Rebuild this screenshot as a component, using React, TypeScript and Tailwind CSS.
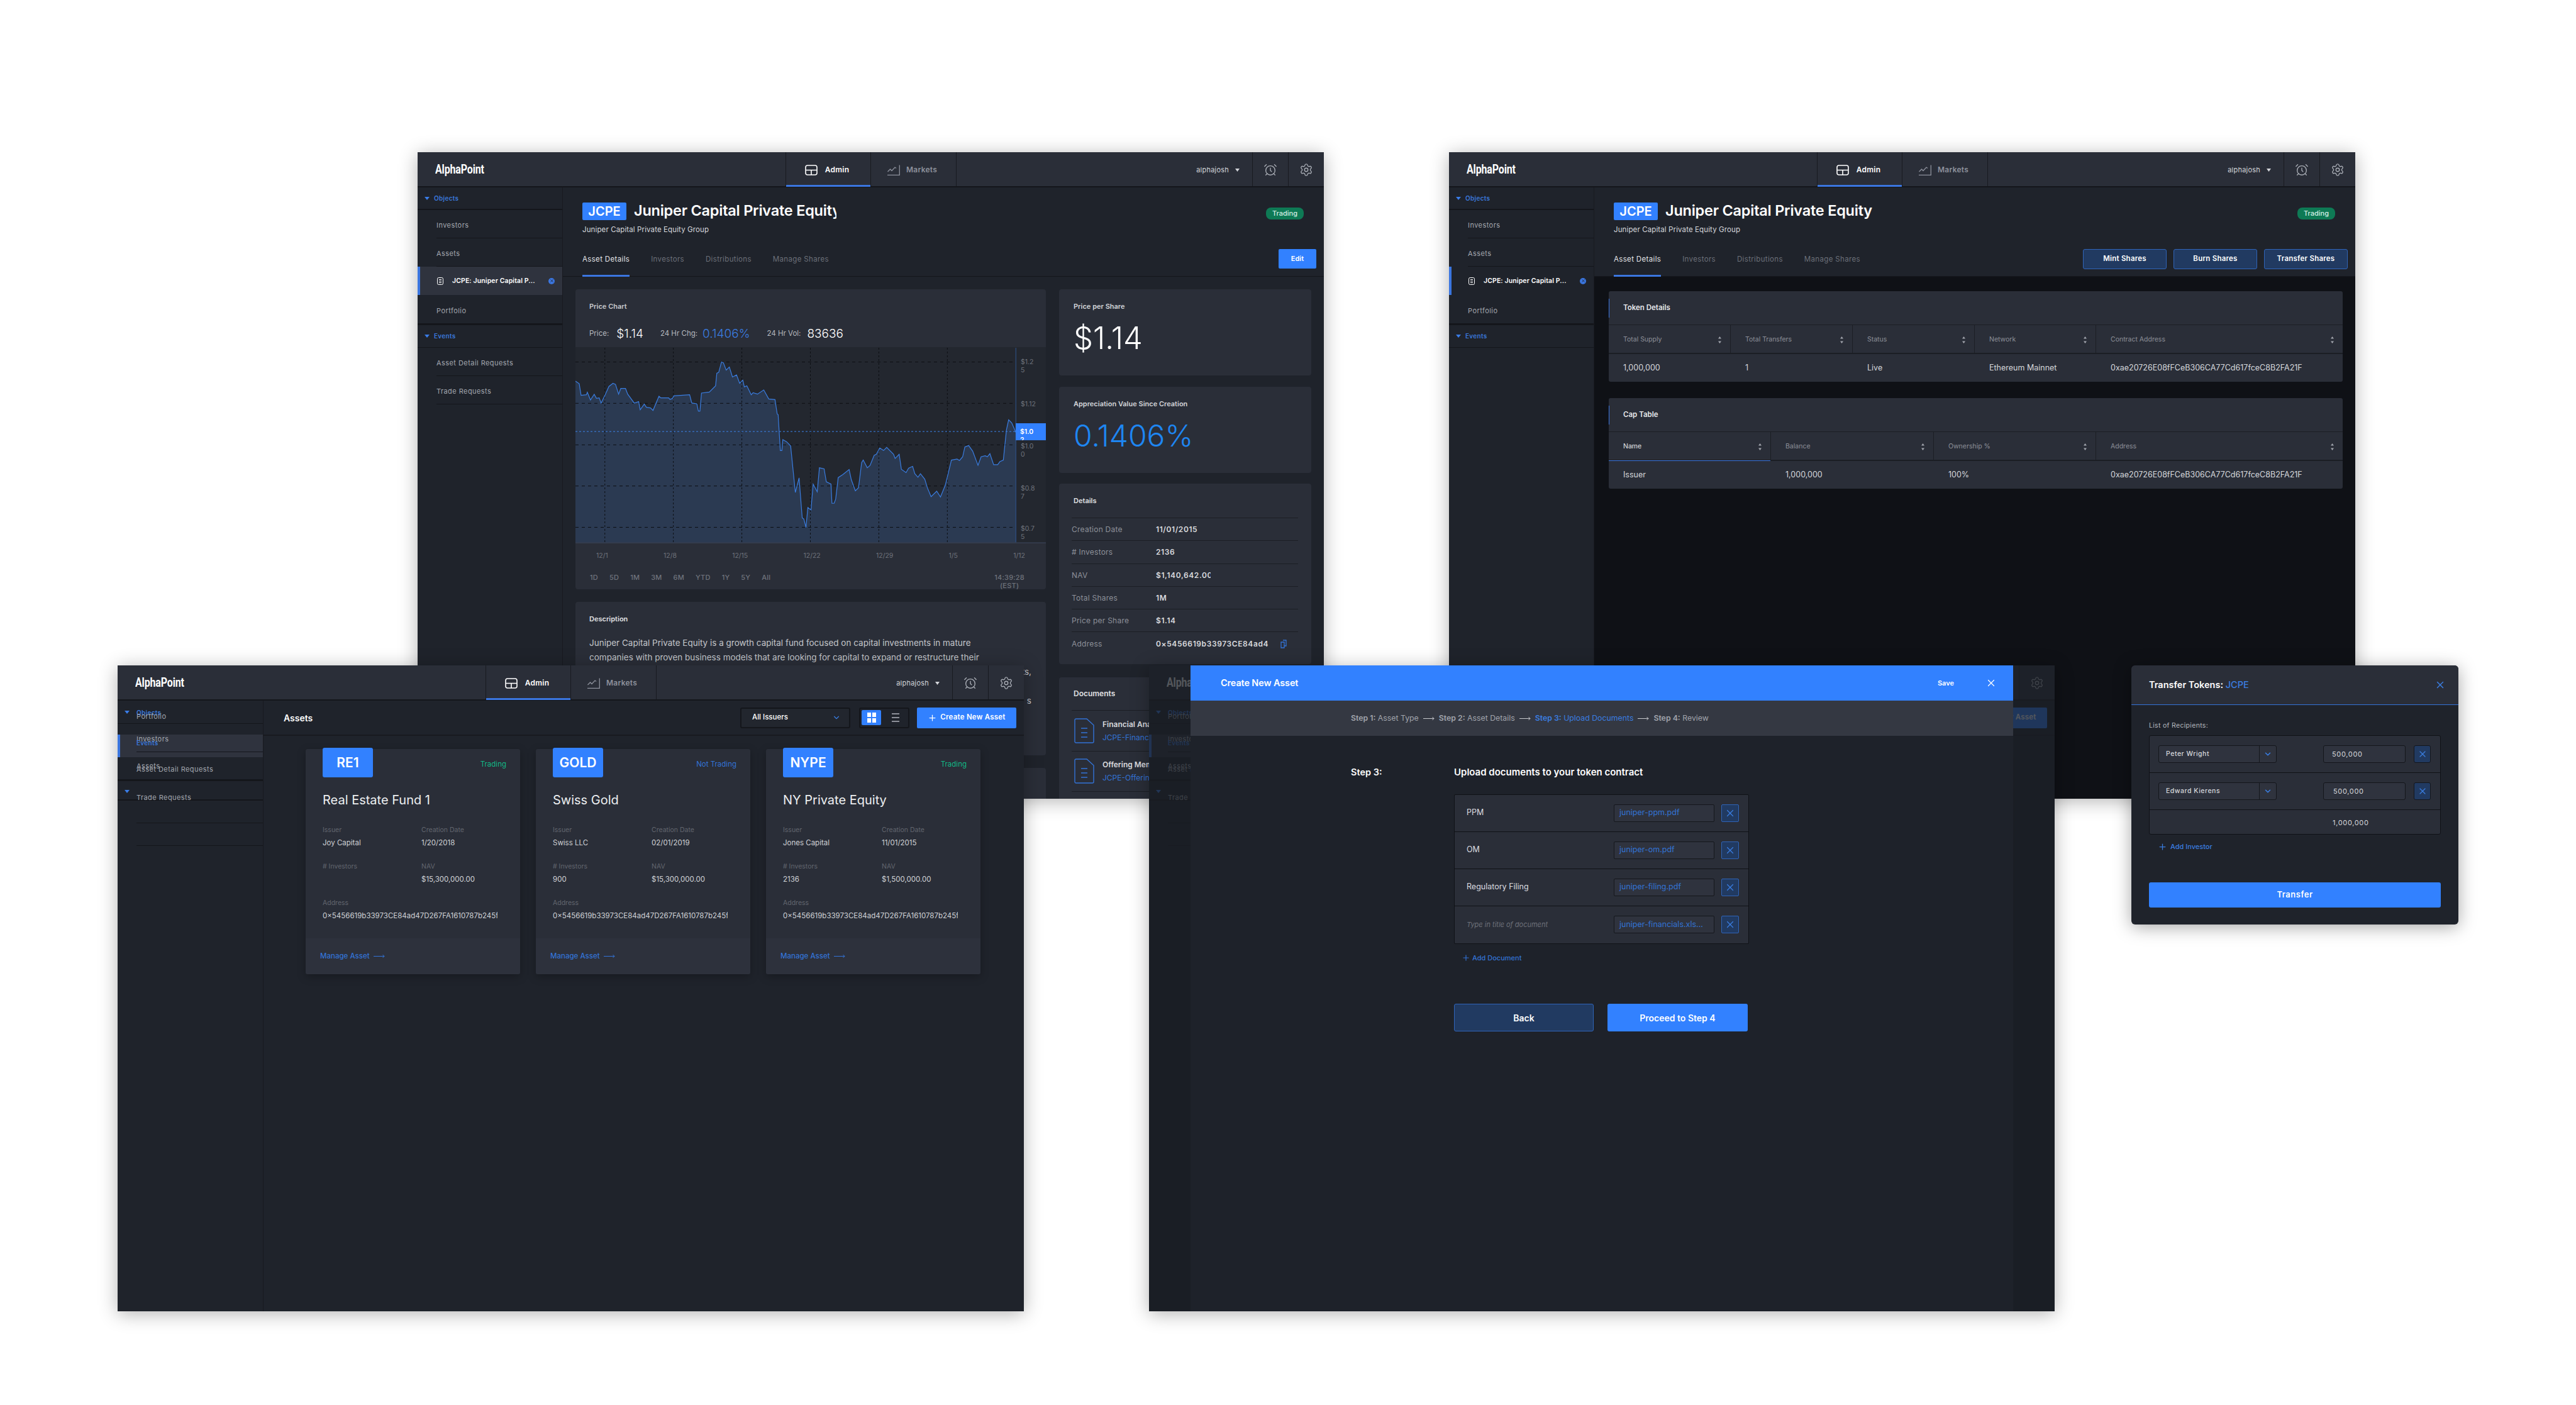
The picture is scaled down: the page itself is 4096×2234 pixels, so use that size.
import React from "react";
import { AlarmClock, ChevronDown, Plus, Settings, X } from "lucide-react";

const PRICE_POINTS = [
  [30, 435], [42, 447], [48, 503], [65, 500], [68, 488], [78, 525], [90, 498], [97, 517], [106, 515], [112, 540],
  [125, 500], [137, 460], [150, 445], [158, 450], [168, 497], [175, 470], [190, 470], [197, 497], [218, 540], [232, 533],
  [237, 572], [250, 545], [257, 560], [270, 563], [278, 575], [297, 507], [303, 515], [328, 515], [332, 522], [340, 518],
  [345, 505], [395, 500], [402, 540], [418, 543], [423, 578], [428, 578], [433, 492], [458, 487], [478, 457], [482, 397],
  [488, 393], [497, 343], [503, 347], [512, 382], [522, 367], [532, 415], [545, 405], [555, 445], [565, 430], [570, 462],
  [578, 457], [592, 500], [598, 490], [612, 497], [632, 477], [648, 520], [668, 523], [675, 592], [678, 595], [685, 767],
  [690, 767], [693, 715], [705, 725], [718, 745], [733, 968], [745, 898], [755, 1090], [760, 1095], [767, 1135], [773, 1040],
  [783, 1052], [790, 928], [803, 965], [810, 850], [825, 855], [832, 917], [847, 928], [850, 1020], [857, 1020], [862, 1000],
  [870, 897], [885, 882], [905, 858], [912, 907], [925, 960], [935, 945], [945, 825], [950, 813], [963, 850], [972, 838],
  [985, 790], [992, 785], [1003, 755], [1015, 767], [1025, 752], [1047, 785], [1052, 805], [1065, 785], [1072, 857], [1087, 873],
  [1095, 852], [1108, 843], [1115, 878], [1125, 895], [1133, 878], [1147, 905], [1155, 945], [1167, 988], [1185, 962], [1197, 990],
  [1212, 935], [1218, 900], [1232, 813], [1250, 808], [1258, 815], [1268, 797], [1275, 750], [1287, 743], [1300, 770], [1317, 838],
  [1327, 797], [1340, 792], [1347, 797], [1355, 782], [1367, 835], [1380, 835], [1387, 820], [1398, 813], [1408, 668], [1415, 620],
  [1425, 635], [1438, 680],
];

const Y_LABELS = [
  { top: 16, lines: ["$1.2", "5"] },
  { top: 83, lines: ["$1.12"] },
  { top: 150, lines: ["$1.0", "0"] },
  { top: 217, lines: ["$0.8", "7"] },
  { top: 281, lines: ["$0.7", "5"] },
];

const ASSETS = [
  { ticker: "RE1", status: "Trading", green: true, name: "Real Estate Fund 1", issuer: "Joy Capital", date: "1/20/2018", investors: "", nav: "$15,300,000.00" },
  { ticker: "GOLD", status: "Not Trading", green: false, name: "Swiss Gold", issuer: "Swiss LLC", date: "02/01/2019", investors: "900", nav: "$15,300,000.00" },
  { ticker: "NYPE", status: "Trading", green: true, name: "NY Private Equity", issuer: "Jones Capital", date: "11/01/2015", investors: "2136", nav: "$1,500,000.00" },
];

// the sidebar on the assets screen renders with its rows collapsed onto each other
const GLITCH_TEXT = [
  { top: 19, label: "Objects", blue: true },
  { top: 25, label: "Portfolio", blue: false },
  { top: 61, label: "Investors", blue: false },
  { top: 67, label: "Events", blue: true },
  { top: 104, label: "Assets", blue: false },
  { top: 109, label: "Asset Detail Requests", blue: false },
  { top: 154, label: "Trade Requests", blue: false },
];

const GLITCH_LINES = [
  { top: 36, left: 0, h: 1 },
  { top: 81, left: 30, h: 1 },
  { top: 125, left: 0, h: 3 },
  { top: 157, left: 0, h: 2 },
  { top: 194, left: 30, h: 1 },
  { top: 230, left: 30, h: 1 },
];

const DETAILS = [
  ["Creation Date", "11/01/2015", "w-[67px]"],
  ["# Investors", "2136", "w-[67px]"],
  ["NAV", "$1,140,642.00", "w-[87px]"],
  ["Total Shares", "1M", "w-[87px]"],
  ["Price per Share", "$1.14", "w-[87px]"],
];

const UPLOADS = [
  { title: "PPM", file: "juniper-ppm.pdf" },
  { title: "OM", file: "juniper-om.pdf" },
  { title: "Regulatory Filing", file: "juniper-filing.pdf" },
  { title: "", file: "juniper-financials.xls..." },
];

const AdminIcon = () => (
  <svg width="20" height="17" viewBox="0 0 20 17" fill="none" stroke="currentColor" strokeWidth="1.6">
    <rect x="1" y="1" width="18" height="15" rx="3" />
    <path d="M1 8.5h18M10 8.5V16" />
  </svg>
);

const MarketsIcon = () => (
  <svg width="20" height="17" viewBox="0 0 20 17" fill="none" stroke="currentColor" strokeWidth="1.3">
    <path d="M19.3 0.5v15.8H0M0.5 11l4-4 2.5 2.5 5-5.5 2 1.5" />
  </svg>
);

const Triangle = () => (
  <svg width="8" height="5" viewBox="0 0 8 5" className="fill-[#3a7de8]">
    <path d="M0 0h8L4 5z" />
  </svg>
);

const SortIcon = () => (
  <svg width="5" height="11" viewBox="0 0 5 11" className="fill-[#a2a6ae]">
    <path d="M2.5 0L5 3.6H0zM2.5 11L0 7.4h5z" />
  </svg>
);

const LongArrow = ({ className }: { className: string }) => (
  <svg width="18" height="7" viewBox="0 0 18 7" fill="none" stroke="currentColor" strokeWidth="1" className={className}>
    <path d="M0 3.5h17M14.5 1l2.5 2.5L14.5 6" />
  </svg>
);

const FileIcon = () => (
  <svg width="32" height="40" viewBox="0 0 32 40" fill="none" stroke="#3373d6" strokeWidth="1.4">
    <path d="M3 1h17l11 10v26a2 2 0 0 1-2 2H3a2 2 0 0 1-2-2V3a2 2 0 0 1 2-2z" />
    <path d="M11 16h10M11 23h10M11 30h10" />
  </svg>
);

const Logo = () => (
  <span className="origin-left scale-x-[0.8] font-['Roboto',sans-serif] text-[20px] font-bold tracking-[-0.2px] text-white">
    AlphaPoint
  </span>
);

const TopBar = () => (
  <header className="flex h-14 shrink-0 items-stretch border-b-2 border-[#14161b] bg-[#2a2e38]">
    <div className="flex w-[585px] items-center pl-7">
      <Logo />
    </div>
    <div className="relative flex w-[136px] items-center justify-center gap-3 border-x border-[#181a20] pb-[1px] pr-[4px] pt-[3px] text-white">
      <AdminIcon />
      <span className="text-[12px] font-semibold tracking-[0.02em]">Admin</span>
      <div className="absolute inset-x-0 -bottom-px h-[3px] bg-[#3b76e0]" />
    </div>
    <div className="flex w-[136px] items-center justify-center gap-2.5 border-r border-[#181a20] pb-[1px] pr-[4px] pt-[3px] text-[#8d919c]">
      <MarketsIcon />
      <span className="text-[12px] font-semibold tracking-[0.02em]">Markets</span>
    </div>
    <div className="flex flex-1 items-center justify-end gap-[10px] pr-[20px] pt-[2px] text-[#d3d5da]">
      <span className="text-[11px] tracking-[0.02em]">alphajosh</span>
      <svg width="7" height="5" viewBox="0 0 7 5" className="fill-[#d3d5da]">
        <path d="M0 0h7L3.5 5z" />
      </svg>
    </div>
    <div className="flex w-[57px] items-center justify-center border-l border-[#181a20] pt-[2px] text-[#a9adb5]">
      <AlarmClock size={22} strokeWidth={1.5} />
    </div>
    <div className="flex w-[57px] items-center justify-center border-l border-[#181a20] pt-[2px] text-[#a9adb5]">
      <Settings size={22} strokeWidth={1.5} />
    </div>
  </header>
);

const NavSection = ({ label, thick }: { label: string; thick?: boolean }) => (
  <div className={`flex shrink-0 items-center gap-[7px] pl-[11px] ${thick ? "h-[39px] border-t-[3px] border-b border-[#14161b]" : "h-9 border-b-2 border-[#14161b]"}`}>
    <Triangle />
    <span className="text-[10px] font-semibold tracking-[0.03em] text-[#3a78dc]">{label}</span>
  </div>
);

const NavRow = ({ label }: { label: string }) => (
  <div className="ml-[30px] flex h-[45px] shrink-0 items-center border-b border-[#14161b] pt-[5px] text-[11px] tracking-[0.04em] text-[#a3a7af]">
    {label}
  </div>
);

const SideNav = ({ lit, events }: { lit: boolean; events: boolean }) => (
  <aside className="flex w-[231px] shrink-0 flex-col border-r border-[#181a20] bg-[#1f232b]">
    <NavSection label="Objects" />
    <NavRow label="Investors" />
    <NavRow label="Assets" />
    <div className={`flex h-[45px] shrink-0 items-center border-l-4 border-[#3b76e0] pl-[27px] ${lit ? "bg-[#2f333e]" : ""}`}>
      <svg width="10" height="12" viewBox="0 0 10 12" fill="none" stroke="#fff" strokeWidth="1">
        <rect x="0.5" y="0.5" width="9" height="11" rx="2" />
        <path d="M3 3.5h4M3 6h4M3 8.5h4" />
      </svg>
      <span className="ml-[14px] w-[137px] truncate text-[10.5px] font-semibold tracking-[0.01em] text-white">JCPE: Juniper Capital P...</span>
      <span className="ml-[16px] flex size-[10px] items-center justify-center rounded-full bg-[#3b76e0] text-[#1f232b]">
        <X size={7} strokeWidth={3} />
      </span>
    </div>
    <div className="ml-[30px] flex h-[45px] shrink-0 items-center pt-[5px] text-[11px] tracking-[0.04em] text-[#a3a7af]">Portfolio</div>
    <NavSection label="Events" thick />
    {events && <NavRow label="Asset Detail Requests" />}
    {events && <NavRow label="Trade Requests" />}
  </aside>
);

const AssetHeading = ({ clip, actions }: { clip: boolean; actions: React.ReactNode }) => (
  <div className="relative h-[142px] shrink-0 border-b border-[#14161b] bg-[#1f232b] pl-[31px] pt-[24px]">
    <div className="flex h-[28px] items-center">
      <span className="flex h-[28px] w-[70px] items-center justify-center rounded-[2px] bg-[#3281ff] text-[20px] font-semibold text-white">JCPE</span>
      <h1 className={`-mt-[3px] ml-3 overflow-hidden whitespace-nowrap text-[23.5px] font-semibold tracking-[-0.01em] text-white ${clip ? "w-[322px]" : ""}`}>
        Juniper Capital Private Equity
      </h1>
    </div>
    <p className="mt-[7px] text-[11.5px] tracking-[0.01em] text-[#d6d8dc]">Juniper Capital Private Equity Group</p>
    <nav className="absolute -bottom-px left-[31px] flex gap-[34px] text-[11.5px] tracking-[0.03em] text-[#6c7079]">
      <span className="border-b-[3px] border-[#3b76e0] pb-[16px] text-[#e3e4e7]">Asset Details</span>
      <span>Investors</span>
      <span>Distributions</span>
      <span>Manage Shares</span>
    </nav>
    <span className="absolute right-[32px] top-[32px] flex h-[19px] w-[60px] items-center justify-center rounded-lg bg-[#0e7a55] text-[11px] font-medium text-[#d5efe5]">Trading</span>
    <div className="absolute right-[12px] top-[98px] flex gap-[11px]">{actions}</div>
  </div>
);

const Card = ({ className, children }: { className: string; children: React.ReactNode }) => (
  <section className={`shrink-0 rounded-[4px] bg-[#2a2e38] ${className}`}>{children}</section>
);

const PriceChart = () => {
  const line = PRICE_POINTS.map(([x, y]) => `${x},${y}`).join(" ");
  return (
    <div className="relative h-[312px] border-t border-[#23262e] bg-[#23272f]">
      <svg className="size-full" viewBox="30 275 1504 937" preserveAspectRatio="none">
        <polygon points={`30,1212 ${line} 1438,1212`} fill="#2b3a52" />
        {[343, 541, 740, 937, 1135].map((y) => (
          <line key={y} x1="30" x2="1438" y1={y} y2={y} stroke="#0d0f13" strokeDasharray="5 5" vectorEffect="non-scaling-stroke" />
        ))}
        {[124, 343, 562, 781, 1000, 1219].map((x) => (
          <line key={x} x1={x} x2={x} y1="275" y2="1212" stroke="#0d0f13" strokeDasharray="3 3" vectorEffect="non-scaling-stroke" />
        ))}
        <line x1="30" x2="1438" y1="676" y2="676" stroke="#3d84ea" strokeDasharray="3 3" vectorEffect="non-scaling-stroke" />
        <line x1="1438" x2="1438" y1="275" y2="1212" stroke="#2f5590" vectorEffect="non-scaling-stroke" />
        <polyline points={line} fill="none" stroke="#3a7de0" strokeWidth="1.2" vectorEffect="non-scaling-stroke" />
        <line x1="30" x2="1534" y1="1210" y2="1210" stroke="#353d4e" strokeWidth="2" vectorEffect="non-scaling-stroke" />
      </svg>
      {Y_LABELS.map((l) => (
        <div key={l.top} className="absolute left-[708px] text-[10.5px] leading-[13px] text-[#6f737c]" style={{ top: l.top }}>
          {l.lines.map((t) => (
            <div key={t}>{t}</div>
          ))}
        </div>
      ))}
      <div className="absolute left-[700px] top-[120px] h-[27px] w-12 overflow-hidden bg-[#3281ff] pl-[7px] pt-[7px] text-[10.5px] font-semibold leading-[13px] text-white">
        $1.0
        <br />2
      </div>
    </div>
  );
};

const AssetDetailsBody = () => (
  <div className="flex flex-1 gap-[21px] overflow-hidden pl-[20px] pt-[20px]">
    <div className="flex w-[748px] shrink-0 flex-col gap-[20px]">
      <Card className="h-[477px]">
        <h3 className="px-[22px] pb-[16px] pt-[20px] text-[11px] font-semibold leading-[14px] text-[#c7c9ce]">Price Chart</h3>
        <div className="flex h-[42px] items-center px-[22px] text-[11.5px] text-[#b6b9bf]">
          <span>Price:</span>
          <span className="ml-3 text-[19px] font-light text-white">$1.14</span>
          <span className="ml-[27px]">24 Hr Chg:</span>
          <span className="ml-2 text-[19px] font-light text-[#3a7de0]">0.1406%</span>
          <span className="ml-[27px]">24 Hr Vol:</span>
          <span className="ml-2.5 text-[19px] font-light text-white">83636</span>
        </div>
        <PriceChart />
        <div className="flex justify-between px-[33px] pt-[13px] text-[10.5px] leading-[13px] text-[#6f737c]">
          {["12/1", "12/8", "12/15", "12/22", "12/29", "1/5", "1/12"].map((d) => (
            <span key={d}>{d}</span>
          ))}
        </div>
        <div className="flex items-start justify-between pl-[23px] pr-[34px] pt-[22px] text-[11px] font-medium leading-[13px] tracking-[0.02em] text-[#6f737c]">
          <div className="flex gap-[18px]">
            {["1D", "5D", "1M", "3M", "6M", "YTD", "1Y", "5Y", "All"].map((r) => (
              <span key={r}>{r}</span>
            ))}
          </div>
          <span className="text-center">
            14:39:28
            <br />
            (EST)
          </span>
        </div>
      </Card>
      <Card className="h-[244px] px-[22px] pt-[20px]">
        <h3 className="text-[11px] font-semibold leading-[14px] text-[#e0e1e4]">Description</h3>
        <div className="mt-[20px] whitespace-nowrap text-[13.5px] leading-[23px] text-[#c4c6cb]">
          <p>Juniper Capital Private Equity is a growth capital fund focused on capital investments in mature</p>
          <p>companies with proven business models that are looking for capital to expand or restructure their</p>
          <p className="w-[703px] text-right">operations, enter new markets,</p>
          <p className="w-[703px] text-right">&nbsp;</p>
          <p className="w-[703px] text-right">s</p>
        </div>
      </Card>
      <Card className="h-40">
        <span />
      </Card>
    </div>
    <div className="flex w-[401px] shrink-0 flex-col gap-[18px]">
      <Card className="h-[137px] px-[23px] pt-[20px]">
        <h3 className="text-[11px] font-semibold leading-[14px] text-[#d3d5d9]">Price per Share</h3>
        <div className="mt-[20px] text-[49px] font-light leading-[48px] text-white">$1.14</div>
      </Card>
      <Card className="h-[137px] px-[23px] pt-[20px]">
        <h3 className="w-[190px] overflow-hidden whitespace-nowrap text-[11px] font-semibold leading-[14px] text-[#d3d5d9]">Appreciation Value Since Creation</h3>
        <div className="mt-[20px] text-[48px] font-light leading-[48px] text-[#1e86f2]">0.1406%</div>
      </Card>
      <Card className="-mt-px h-[287px] pl-[20px] pr-[21px]">
        <h3 className="flex h-[55px] items-center border-b border-[#1b1e24] pl-[3px] text-[11px] font-semibold text-[#e0e1e4]">Details</h3>
        {DETAILS.map(([label, value, clip]) => (
          <div key={label} className="flex h-[36.3px] items-center border-b border-[#1b1e24] pt-[1px] text-[12px] tracking-[0.02em] text-[#8d9099]">
            <span className="w-[134px]">{label}</span>
            <span className={`${clip} overflow-hidden whitespace-nowrap font-semibold tracking-[0.05em] text-[#d9dade]`}>{value}</span>
          </div>
        ))}
        <div className="flex h-[36.3px] items-center pt-[1px] text-[12px] tracking-[0.02em] text-[#8d9099]">
          <span className="w-[134px]">Address</span>
          <span className="w-[186px] overflow-hidden whitespace-nowrap font-semibold tracking-[0.05em] text-[#d9dade]">0×5456619b33973CE84ad4</span>
          <svg width="10" height="14" viewBox="0 0 10 14" fill="none" stroke="#3373d6" strokeWidth="1.3" className="ml-[12px]">
            <path d="M4 1h5v9H6M1 4h5v9H1z" />
          </svg>
        </div>
      </Card>
      <Card className="mt-[3px] h-[220px] pl-[20px] pr-[21px]">
        <h3 className="flex h-[53px] items-center border-b border-[#1b1e24] pl-[3px] text-[12px] font-semibold text-[#e0e1e4]">
          <span className="w-[66px] overflow-hidden whitespace-nowrap">Documents</span>
        </h3>
        {[
          ["Financial Analysis", "JCPE-Financials.xls"],
          ["Offering Memo", "JCPE-Offering.pdf"],
        ].map(([title, file]) => (
          <div key={title} className="flex h-[64.5px] items-center gap-[13px] border-b border-[#1b1e24] pl-[4px]">
            <FileIcon />
            <div className="text-[12px] leading-[21px]">
              <div className="font-semibold text-[#d9dade]">{title}</div>
              <div className="text-[#3373d6]">{file}</div>
            </div>
          </div>
        ))}
      </Card>
    </div>
  </div>
);

const TokenTable = ({
  title,
  cols,
  row,
  activeFirst,
}: {
  title: string;
  cols: { label: string; width: string }[];
  row: string[];
  activeFirst: boolean;
}) => (
  <section className="h-[144px] rounded-[3px] bg-[#2a2e38]">
    <div className="relative flex h-[54px] items-center border-b border-[#1b1e24] pl-[23px] text-[11.5px] font-semibold text-[#e6e7ea]">
      <div className="absolute left-0 top-[12px] h-[30px] w-px bg-[#3b76e0]" />
      {title}
    </div>
    <div className="flex h-[46px] border-b-2 border-[#1b1e24] text-[10.5px] text-[#8d9099]">
      {cols.map((c, i) => (
        <div key={c.label} className={`relative flex items-center justify-between border-r border-[#1b1e24] pl-[23px] pr-[14px] pt-[2px] last:border-r-0 ${c.width}`}>
          <span className={activeFirst && i === 0 ? "text-[#e6e7ea]" : ""}>{c.label}</span>
          <SortIcon />
          {activeFirst && i === 0 && <div className="absolute inset-x-0 -bottom-[2px] h-px bg-[#3b76e0]" />}
        </div>
      ))}
    </div>
    <div className="flex h-[44px] items-center pt-[1px] text-[12.5px] text-[#d6d8dc]">
      {cols.map((c, i) => (
        <div key={c.label} className={`whitespace-nowrap pl-[23px] ${c.width}`}>
          {row[i]}
        </div>
      ))}
    </div>
  </section>
);

const OutlineButton = ({ label }: { label: string }) => (
  <button className="flex h-[32px] w-[133px] items-center justify-center rounded-[3px] border border-[#2f64b8] bg-[#213a61] text-[11.5px] font-semibold tracking-[0.02em] text-white">
    {label}
  </button>
);

const AssetDetailsWindow = () => (
  <div className="absolute left-[664px] top-[242px] flex h-[1028px] w-[1441px] flex-col overflow-hidden bg-[#1f232b] shadow-[0_4px_28px_rgba(0,0,0,0.3)]">
    <TopBar />
    <div className="flex flex-1 overflow-hidden">
      <SideNav lit events />
      <div className="flex flex-1 flex-col overflow-hidden">
        <AssetHeading
          clip
          actions={
            <button className="flex h-[31px] w-[60px] items-center justify-center rounded-[2px] bg-[#3281ff] text-[11px] font-semibold text-white">Edit</button>
          }
        />
        <AssetDetailsBody />
      </div>
    </div>
  </div>
);

const ManageSharesWindow = () => (
  <div className="absolute left-[2304px] top-[242px] flex h-[1028px] w-[1441px] flex-col overflow-hidden bg-[#1f232b] shadow-[0_4px_28px_rgba(0,0,0,0.3)]">
    <TopBar />
    <div className="flex flex-1 overflow-hidden">
      <SideNav lit={false} events={false} />
      <div className="flex flex-1 flex-col overflow-hidden">
        <AssetHeading
          clip={false}
          actions={
            <>
              <OutlineButton label="Mint Shares" />
              <OutlineButton label="Burn Shares" />
              <OutlineButton label="Transfer Shares" />
            </>
          }
        />
        <div className="flex flex-1 flex-col gap-[26px] bg-[#0f1116] pl-[23px] pr-[20px] pt-[23px]">
          <TokenTable
            title="Token Details"
            activeFirst={false}
            cols={[
              { label: "Total Supply", width: "w-[194px]" },
              { label: "Total Transfers", width: "w-[194px]" },
              { label: "Status", width: "w-[194px]" },
              { label: "Network", width: "w-[193px]" },
              { label: "Contract Address", width: "flex-1" },
            ]}
            row={["1,000,000", "1", "Live", "Ethereum Mainnet", "0xae20726E08fFCeB306CA77Cd617fceC8B2FA21F"]}
          />
          <TokenTable
            title="Cap Table"
            activeFirst
            cols={[
              { label: "Name", width: "w-[258px]" },
              { label: "Balance", width: "w-[259px]" },
              { label: "Ownership %", width: "w-[258px]" },
              { label: "Address", width: "flex-1" },
            ]}
            row={["Issuer", "1,000,000", "100%", "0xae20726E08fFCeB306CA77Cd617fceC8B2FA21F"]}
          />
        </div>
      </div>
    </div>
  </div>
);

const GlitchSidebar = () => (
  <aside className="relative w-[232px] shrink-0 border-r border-[#181a20] bg-[#1f232b]">
    <div className="absolute inset-x-0 top-[54px] h-[36px] border-l-4 border-[#3b76e0] bg-[#2f333e]" />
    {GLITCH_LINES.map((l) => (
      <div key={l.top} className="absolute right-0 bg-[#14161b]" style={{ top: l.top, left: l.left, height: l.h }} />
    ))}
    <div className="absolute left-[11px] top-[16px]">
      <Triangle />
    </div>
    <div className="absolute left-[11px] top-[142px]">
      <Triangle />
    </div>
    {GLITCH_TEXT.map((t) => (
      <span
        key={t.label}
        className={`absolute left-[30px] -translate-y-1/2 whitespace-nowrap ${t.blue ? "text-[10px] font-semibold tracking-[0.03em] text-[#3a78dc]" : "text-[11px] tracking-[0.04em] text-[#a3a7af]"}`}
        style={{ top: t.top }}
      >
        {t.label}
      </span>
    ))}
  </aside>
);

const AssetCard = ({ asset }: { asset: (typeof ASSETS)[number] }) => (
  <article className="relative flex h-[358px] w-[341px] shrink-0 flex-col rounded-[3px] bg-[#2a2e38] shadow-[0_4px_14px_rgba(0,0,0,0.25)]">
    <div className="flex-1 px-[27px]">
      <div className="flex items-start justify-between">
        <span className="-mt-[2px] flex h-[47px] w-[80px] items-center justify-center rounded-[3px] bg-[#3281ff] text-[21px] font-semibold text-white">
          {asset.ticker}
        </span>
        <span className={`-mr-[5px] mt-[16px] text-[11.5px] ${asset.green ? "text-[#12b886]" : "text-[#3373d6]"}`}>{asset.status}</span>
      </div>
      <h2 className="mt-[22px] text-[20px] leading-[28px] text-[#eceef0]">{asset.name}</h2>
      <dl className="mt-[24px] grid grid-cols-[157px_1fr] gap-y-[18px] text-[11.5px]">
        <div>
          <dt className="text-[10.5px] leading-[20px] text-[#62666f]">Issuer</dt>
          <dd className="leading-[20px] text-[#d0d2d6]">{asset.issuer}</dd>
        </div>
        <div>
          <dt className="text-[10.5px] leading-[20px] text-[#62666f]">Creation Date</dt>
          <dd className="leading-[20px] text-[#d0d2d6]">{asset.date}</dd>
        </div>
        <div>
          <dt className="text-[10.5px] leading-[20px] text-[#62666f]"># Investors</dt>
          <dd className="h-[20px] leading-[20px] text-[#d0d2d6]">{asset.investors}</dd>
        </div>
        <div>
          <dt className="text-[10.5px] leading-[20px] text-[#62666f]">NAV</dt>
          <dd className="leading-[20px] text-[#d0d2d6]">{asset.nav}</dd>
        </div>
        <div className="col-span-2">
          <dt className="text-[10.5px] leading-[20px] text-[#62666f]">Address</dt>
          <dd className="w-[278px] overflow-hidden whitespace-nowrap leading-[20px] text-[#d0d2d6]">0×5456619b33973CE84ad47D267FA1610787b245f</dd>
        </div>
      </dl>
    </div>
    <div className="flex h-[57px] shrink-0 items-center gap-[6px] rounded-b-[3px] bg-[#2d313c] pl-[23px] text-[11.5px] font-medium text-[#3373d6]">
      Manage Asset
      <LongArrow className="text-[#3373d6]" />
    </div>
  </article>
);

const AssetsBody = () => (
  <div className="flex flex-1 overflow-hidden">
    <GlitchSidebar />
    <div className="flex flex-1 flex-col">
      <div className="flex h-[56px] items-center border-b-2 border-[#181a20] pl-[32px] pr-[12px]">
        <h1 className="flex-1 text-[14px] font-semibold text-white">Assets</h1>
        <div className="flex h-[33px] w-[175px] items-center justify-between rounded-[3px] border-2 border-[#14161b] bg-[#22262e] pl-[17px] pr-[13px] text-[11.5px] font-medium text-white">
          All Issuers
          <ChevronDown size={14} strokeWidth={2} className="text-[#3a7de0]" />
        </div>
        <div className="ml-[14px] flex h-[33px] w-[80px] items-center gap-[17px] rounded-[3px] border-2 border-[#14161b] pl-[2px]">
          <span className="grid h-[24px] w-[31px] grid-cols-[6px_6px] content-center justify-center gap-[2px] rounded-[2px] bg-[#3281ff]">
            <i className="h-[7px] bg-white" />
            <i className="h-[7px] bg-white" />
            <i className="h-[7px] bg-white" />
            <i className="h-[7px] bg-white" />
          </span>
          <span className="flex flex-col gap-[4px]">
            <i className="h-[2px] w-[12px] bg-[#8d9099]" />
            <i className="h-[2px] w-[12px] bg-[#8d9099]" />
            <i className="h-[2px] w-[12px] bg-[#8d9099]" />
          </span>
        </div>
        <button className="ml-[12px] flex h-[33px] w-[158px] items-center justify-center gap-[5px] rounded-[2px] bg-[#3281ff] text-[11.5px] font-semibold tracking-[0.02em] text-white">
          <Plus size={15} strokeWidth={2} />
          Create New Asset
        </button>
      </div>
      <div className="flex gap-[25px] pl-[67px] pt-[21px]">
        {ASSETS.map((a) => (
          <AssetCard key={a.ticker} asset={a} />
        ))}
      </div>
    </div>
  </div>
);

const AssetsWindow = () => (
  <div className="absolute left-[187px] top-[1058px] flex h-[1027px] w-[1441px] flex-col overflow-hidden bg-[#1f232b] shadow-[0_4px_28px_rgba(0,0,0,0.3)]">
    <TopBar />
    <AssetsBody />
  </div>
);

const Step = ({ num, label, active }: { num: string; label: string; active?: boolean }) => (
  <span className={active ? "text-[#3a7de0]" : "text-[#a1a4ac]"}>
    <b className="font-semibold">Step {num}:</b> {label}
  </span>
);

const CreateAssetWindow = () => (
  <div className="absolute left-[1827px] top-[1058px] h-[1027px] w-[1440px] overflow-hidden bg-[#1f232b] shadow-[0_4px_28px_rgba(0,0,0,0.3)]">
    <div className="flex size-full flex-col">
      <TopBar />
      <AssetsBody />
    </div>
    <div className="absolute inset-0 bg-[#1a1d24]/75" />
    <div className="absolute inset-y-0 left-[66px] flex w-[1308px] flex-col bg-[#1e222a]">
      <div className="flex h-14 shrink-0 items-center bg-[#3281ff] pl-[48px] text-white">
        <h2 className="flex-1 text-[14.5px] font-semibold tracking-[-0.01em]">Create New Asset</h2>
        <span className="text-[11px] font-semibold">Save</span>
        <X size={18} strokeWidth={1.6} className="ml-[50px] mr-[26px]" />
      </div>
      <div className="flex h-14 shrink-0 items-center gap-[7px] bg-[#343842] pl-[255px] text-[12.3px]">
        <Step num="1" label="Asset Type" />
        <LongArrow className="text-[#c7c9ce]" />
        <Step num="2" label="Asset Details" />
        <LongArrow className="text-[#c7c9ce]" />
        <Step num="3" label="Upload Documents" active />
        <LongArrow className="text-[#c7c9ce]" />
        <Step num="4" label="Review" />
      </div>
      <div className="pl-[255px] pt-[47px]">
        <div className="flex items-center text-white">
          <span className="w-[164px] text-[14.5px] font-semibold">Step 3:</span>
          <span className="w-[301px] overflow-hidden whitespace-nowrap text-[15px] font-semibold">Upload documents to your token contract</span>
        </div>
        <div className="ml-[164px] mt-[23px] w-[469px]">
          <div className="rounded-[2px] border border-[#0f1116] bg-[#2a2e38]">
            {UPLOADS.map((u) => (
              <div key={u.file} className="flex h-[59px] items-center border-b border-[#0f1116] pl-[19px] pr-[15px] last:border-b-0">
                <span className={`flex-1 ${u.title ? "text-[12.5px] text-[#dcdde0]" : "text-[11px] italic text-[#6d7079]"}`}>{u.title || "Type in title of document"}</span>
                <span className="flex h-[28px] w-[160px] items-center truncate rounded-[2px] border border-[#14161b] bg-[#2f333e] pl-[8px] text-[12.5px] text-[#3373d6]">{u.file}</span>
                <span className="ml-[11px] flex size-[28px] items-center justify-center rounded-[2px] border border-[#2f64b8] bg-[#213a61] text-[#3a7de0]">
                  <X size={18} strokeWidth={1.6} />
                </span>
              </div>
            ))}
          </div>
          <div className="mt-[14px] flex items-center gap-[3px] pl-[12px] text-[11px] font-medium text-[#3373d6]">
            <Plus size={14} strokeWidth={2} />
            Add Document
          </div>
          <div className="mt-[65px] flex gap-[22px]">
            <button className="h-[44px] w-[222px] rounded-[3px] border border-[#2f64b8] bg-[#213a61] text-[14px] font-semibold text-white">Back</button>
            <button className="h-[44px] w-[223px] rounded-[3px] bg-[#3281ff] text-[14px] font-semibold text-white">Proceed to Step 4</button>
          </div>
        </div>
      </div>
    </div>
  </div>
);

const RecipientRow = ({ name, amount, nudge }: { name: string; amount: string; nudge: string }) => (
  <div className="flex h-[59px] items-center border-b border-[#0f1116] pl-[14px]">
    <div className="flex h-[28px] w-[188px] items-stretch rounded-[3px] border border-[#14161b] bg-[#2f333e]">
      <span className="flex flex-1 items-center pl-[11px] text-[10.5px] font-medium tracking-[0.05em] text-[#d6d8dc]">{name}</span>
      <span className="flex w-[27px] items-center justify-center border-l border-[#14161b] text-[#3a7de0]">
        <ChevronDown size={14} strokeWidth={2.8} />
      </span>
    </div>
    <div className={`ml-[74px] flex h-[28px] w-[131px] items-center rounded-[3px] border border-[#14161b] bg-[#2f333e] text-[11px] tracking-[0.06em] text-[#d6d8dc] ${nudge}`}>{amount}</div>
    <span className="ml-[13px] flex h-[28px] w-[27px] items-center justify-center rounded-[3px] border border-[#14161b] bg-[#213a61] text-[#3a7de0]">
      <X size={16} strokeWidth={1.8} />
    </span>
  </div>
);

const TransferModal = () => (
  <div className="absolute left-[3389px] top-[1058px] flex h-[412px] w-[520px] flex-col rounded-[6px] bg-[#1f232b] shadow-[0_4px_28px_rgba(0,0,0,0.35)]">
    <div className="flex h-[63px] shrink-0 items-center justify-between rounded-t-[6px] border-b border-[#3373d6] bg-[#2a2e38] pl-[28px] pr-[20px]">
      <h2 className="text-[14.5px] font-semibold text-white">
        Transfer Tokens: <span className="font-medium text-[#3a7de0]">JCPE</span>
      </h2>
      <X size={18} strokeWidth={2} className="text-[#3a7de0]" />
    </div>
    <div className="px-[28px] pt-[26px]">
      <p className="text-[10.5px] leading-[14px] tracking-[0.03em] text-[#b6b9bf]">List of Recipients:</p>
      <div className="mt-[8px] h-[158px] rounded-[3px] border border-[#0f1116] bg-[#2a2e38]">
        <RecipientRow name="Peter Wright" amount="500,000" nudge="pl-[13px]" />
        <RecipientRow name="Edward Kierens" amount="500,000" nudge="pl-[15px]" />
        <div className="pl-[291px] pt-[12px] text-[11px] tracking-[0.06em] text-[#d6d8dc]">1,000,000</div>
      </div>
      <div className="mt-[11px] flex items-center gap-[5px] pl-[14px] text-[11px] font-medium text-[#3a7de0]">
        <Plus size={15} strokeWidth={2} />
        Add Investor
      </div>
      <button className="mt-[48px] h-[40px] w-full rounded-[3px] bg-[#3281ff] text-[13px] font-semibold tracking-[0.04em] text-white">Transfer</button>
    </div>
  </div>
);

export default function App() {
  return (
    <div className="relative h-[2234px] w-[4096px] overflow-hidden bg-white font-['Inter',sans-serif]">
      <AssetDetailsWindow />
      <ManageSharesWindow />
      <AssetsWindow />
      <CreateAssetWindow />
      <TransferModal />
    </div>
  );
}
